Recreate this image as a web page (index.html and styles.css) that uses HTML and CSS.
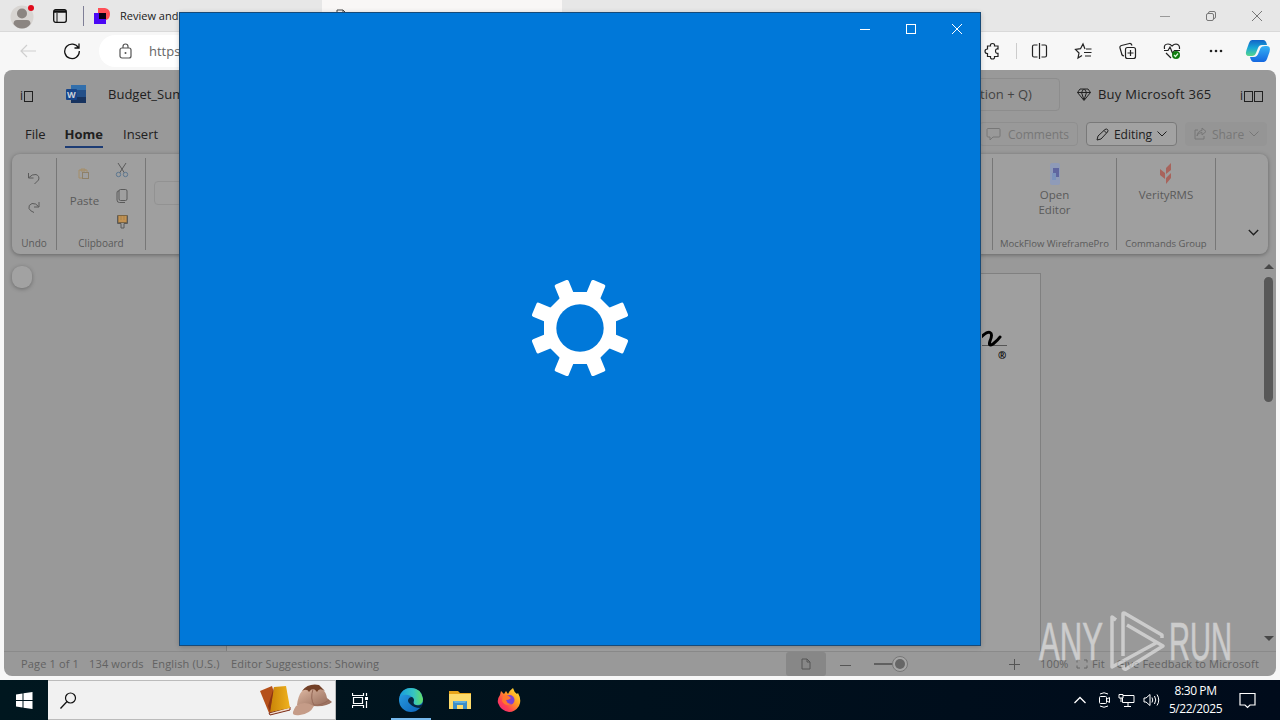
FILE: index.html
```html
<!DOCTYPE html>
<html lang="en">
<head>
    <meta charset="UTF-8">
    <meta name="viewport" content="width=device-width, initial-scale=1.0">
    <title>Desktop</title>
    <link rel="stylesheet" href="styles.css">
</head>
<body>
    <div class="desktop">
        <!-- Browser -->
        <div class="browser">
            <header class="tab-strip">
                <svg class="avatar" width="24" height="26" viewBox="0 0 24 26">
                    <circle cx="12" cy="14" r="11.500" fill="#d8d5d2"/>
                    <circle cx="12" cy="10.500" r="5" fill="#8b8581"/>
                    <path d="M3.500 21 Q3.500 17 7 17 H17 Q20.500 17 20.500 21 Q17 25.500 12 25.500 Q7 25.500 3.500 21Z" fill="#8b8581"/>
                    <circle cx="21" cy="5" r="3" fill="#e00b1c"/>
                </svg>
                <svg class="workspaces" width="14" height="14" viewBox="0 0 14 14">
                    <rect x=".7" y=".7" width="12.600" height="12.600" rx="2" fill="none" stroke="#111" stroke-width="1.300"/>
                    <path d="M1 2.500H13" stroke="#111" stroke-width="2.500"/>
                    <path d="M4 4V13" stroke="#111"/>
                </svg>
                <span class="tab-line"></span>
                <svg class="favicon" width="16" height="16" viewBox="0 0 16 16">
                    <path d="M4 0H11Q16 1 16 6Q16 11 12 12H4Z" fill="#ff4f57"/>
                    <path d="M0 5H12V16H0Z" fill="#4b08f5"/>
                    <path d="M5 5H12V11H5Z" fill="#080014"/>
                </svg>
                <span class="tab-title">Review and delete cookies | ANY</span>
                <div class="active-tab">
                    <svg width="11" height="14" viewBox="0 0 11 14"><path d="M1 1H7L10 4V13H1ZM7 1V4H10" fill="none" stroke="#444"/></svg>
                    <span>Document1To Share</span>
                </div>
                <span class="new-tab">+</span>
                <div class="window-buttons">
                    <svg viewBox="0 0 46 32"><path d="M18 16.500H28" stroke="#999"/></svg>
                    <svg viewBox="0 0 46 32"><path d="M20.500 13.500V13Q20.500 11.500 22 11.500H26Q27.500 11.500 27.500 13V17Q27.500 18.500 26 18.500" fill="none" stroke="#777"/><rect x="18.500" y="13.500" width="7" height="7" rx="1.500" fill="none" stroke="#777"/></svg>
                    <svg viewBox="0 0 46 32"><path d="M18 11L28 21M28 11L18 21" stroke="#777"/></svg>
                </div>
            </header>

            <div class="toolbar">
                <svg class="back" width="16" height="14" viewBox="0 0 16 14"><path d="M16 7H1M7 1L1 7L7 13" fill="none" stroke="#cfcfcf" stroke-width="1.200"/></svg>
                <svg class="reload" width="18" height="18" viewBox="0 0 18 18"><path d="M15.500 6A7.300 7.300 0 1 0 16.300 9M16 1.500V6H11.500" fill="none" stroke="#111" stroke-width="1.300"/></svg>
                <div class="address">
                    <svg width="14" height="16" viewBox="0 0 14 16"><rect x="1" y="5" width="11" height="10" rx="2" fill="none" stroke="#555" stroke-width="1.200"/><path d="M4 5V3.500Q4 1 6.500 1Q9 1 9 3.500V5" fill="none" stroke="#555" stroke-width="1.200"/><circle cx="6.500" cy="10" r="1" fill="#555"/></svg>
                    <span>https://</span>
                </div>
                <div class="toolbar-actions">
                    <svg viewBox="0 0 44 38"><path d="M17 14H20Q19.500 11.500 22 11.500Q24.500 11.500 24 14H27.500V17Q25 16.500 25 19Q25 21.500 27.500 21.300V24.500H24Q24.500 27 22 27Q19.500 27 20 24.500H17V21.500Q14.500 21.500 14.500 19.200Q14.500 17 17 17Z" transform="translate(-1.500 0)"/></svg>
                    <svg viewBox="0 0 44 38"><path d="M20 13H16.500Q15 13 15 14.500V23.500Q15 25 16.500 25H20M24 13H27.500Q29 13 29 14.500V23.500Q29 25 27.500 25H24M22 11V27" transform="translate(-.5 0)"/></svg>
                    <svg viewBox="0 0 44 38"><path d="M23 17L21 12L18.500 16.700L13.500 17.500L17 21L16 26L20 23.500M24 17H29.500M22 20.500H29.500M23 24H29"/></svg>
                    <svg viewBox="0 0 44 38"><path d="M18 24Q15.500 23.500 15.500 21L14 16Q13.500 14 15.500 13.500L23.500 11.500Q25.500 11.200 26 13.500"/><rect x="19.500" y="15.500" width="10" height="11" rx="2"/><path d="M24.500 18V24M21.500 21H27.500"/></svg>
                    <svg viewBox="0 0 44 38"><path d="M14.500 17Q13.500 12 18 12Q20.500 12 22 14Q24 12 26 12Q30 12.500 29.500 17M14 18.500H18L20 15L22.500 21L24.500 18.500H30M16 21L21 26"/><circle cx="26" cy="23" r="4" fill="#107c10" stroke="none"/><path d="M24 23L25.500 24.500L28 21.500" stroke="#d9f7d9"/></svg>
                    <svg viewBox="0 0 44 38"><g fill="#222" stroke="none"><circle cx="17" cy="19" r="1.300"/><circle cx="22" cy="19" r="1.300"/><circle cx="27" cy="19" r="1.300"/></g></svg>
                    <svg class="copilot" viewBox="0 0 40 38">
                        <defs>
                            <linearGradient id="cpA" x1="0" y1="0" x2="0" y2="1"><stop offset="0" stop-color="#1264c8"/><stop offset=".5" stop-color="#18a7d6"/><stop offset="1" stop-color="#57d68a"/></linearGradient>
                            <linearGradient id="cpB" x1="0" y1="0" x2="0" y2="1"><stop offset="0" stop-color="#35b2f5"/><stop offset="1" stop-color="#1467e0"/></linearGradient>
                        </defs>
                        <path d="M14 8H25Q28 8 29 13H24Q21 13 20 16L18 21Q17 24 14 24H11Q6.500 24 8.500 18L11 11Q12 8 14 8Z" fill="url(#cpA)" stroke="none"/>
                        <path d="M26 30H16Q13 30 12 25H16Q19 25 20.500 21L22.500 16Q23.500 14 27 14H29Q33 14 31.500 20L29 27Q28 30 26 30Z" fill="url(#cpB)" stroke="none"/>
                    </svg>
                </div>
            </div>

            <!-- Word document, dimmed -->
            <main class="word">
                <div class="word-header">
                    <span class="launcher">i<i></i></span>
                    <svg class="word-logo" width="20" height="18" viewBox="0 0 20 18">
                        <rect x="5" width="15" height="18" rx="1" fill="#234f88"/>
                        <rect x="5" width="15" height="5" fill="#326fac"/>
                        <rect x="5" y="12" width="15" height="6" fill="#17335f"/>
                        <rect y="4" width="11" height="11" rx="1" fill="#17458a"/>
                        <text x="1" y="13" font-family="Open Sans, sans-serif" font-size="9" font-weight="700" fill="#c9cfd8">W</text>
                    </svg>
                    <span class="doc-name">Budget_Summary</span>
                    <div class="search-box">Search (Option + Q)</div>
                    <div class="buy">
                        <svg width="14" height="13" viewBox="0 0 14 13"><path d="M3 1H11L13.500 4.500L7 12.500L.5 4.500ZM.5 4.500H13.500M4.500 4.500L7 12L9.500 4.500L7.500 1M4.500 4.500L6.500 1" fill="none" stroke="#222"/></svg>
                        <span>Buy Microsoft 365</span>
                    </div>
                    <span class="launcher">i<i></i><i></i></span>
                </div>

                <nav class="word-tabs">
                    <span>File</span>
                    <span class="current">Home</span>
                    <span>Insert</span>
                    <div class="word-actions">
                        <div class="action comments">
                            <svg width="15" height="14" viewBox="0 0 15 14"><path d="M2 1.500H13Q14 1.500 14 2.500V9Q14 10 13 10H7L4 13V10H2Q1 10 1 9V2.500Q1 1.500 2 1.500Z"/></svg>
                            <span>Comments</span>
                        </div>
                        <div class="action editing">
                            <svg width="13" height="13" viewBox="0 0 13 13"><path d="M1 12L2 8L9 1.500Q10.500 .5 11.500 1.500Q12.500 2.500 11.500 4L5 11ZM8 2.500L10.500 5"/></svg>
                            <span>Editing</span>
                            <svg width="10" height="6" viewBox="0 0 10 6"><path d="M.5 .5L5 5L9.500 .5"/></svg>
                        </div>
                        <div class="action share">
                            <svg width="14" height="14" viewBox="0 0 14 14"><path d="M5 3H2V12H11V9M4 9Q4.500 5.500 9 5.500V8L13 4.500L9 1V3.500Q4.500 4 4 9Z"/></svg>
                            <span>Share</span>
                            <svg width="10" height="6" viewBox="0 0 10 6"><path d="M.5 .5L5 5L9.500 .5"/></svg>
                        </div>
                    </div>
                </nav>

                <div class="ribbon">
                    <section class="group undo">
                        <div class="group-icons">
                            <svg width="14" height="14" viewBox="0 0 14 14"><path d="M1.500 2V7H6.500M2 6.500Q5 3 9 3.500Q13 5 11.500 9L7.500 13"/></svg>
                            <svg width="14" height="14" viewBox="0 0 14 14"><path d="M12 2V7H7M11.500 6.500Q9 3 5 3.500Q1 5 2 8.500Q3 11 7 12.500"/></svg>
                        </div>
                        <span class="group-name">Undo</span>
                    </section>
                    <section class="group clipboard">
                        <div class="clipboard-tools">
                            <div class="paste">
                                <svg width="12" height="12" viewBox="0 0 12 12"><path d="M4 10H1V2H9V4M3 1H7V3H3Z" stroke="#a58e68"/><rect x="4.500" y="4.500" width="6" height="6" stroke="#8e8068"/></svg>
                                <span>Paste</span>
                            </div>
                            <div class="group-icons">
                                <svg width="14" height="16" viewBox="0 0 14 16"><path d="M3 1L9.500 11M11 1L4.500 11"/><circle cx="3.500" cy="12.500" r="2.200" stroke="#5d7790"/><circle cx="10.500" cy="12.500" r="2.200" stroke="#5d7790"/></svg>
                                <svg width="14" height="16" viewBox="0 0 14 16"><rect x="4" y="1.500" width="8" height="11" rx="1.500"/><path d="M4 3H3Q2 3 2 5V12Q2 14.500 4.500 14.500H10"/></svg>
                                <svg width="14" height="16" viewBox="0 0 14 16"><rect x="3" y="1.500" width="9" height="7" fill="#c39252" stroke="#7b6543"/><path d="M6 2V6M9 2V6" stroke="#a5834f"/><path d="M2.500 1.500V9.500H6V14H9V9.500H12.500V1.500"/></svg>
                            </div>
                        </div>
                        <span class="group-name">Clipboard</span>
                    </section>
                    <section class="group font-group"><span class="font-field"></span></section>
                    <section class="group addin">
                        <svg width="12" height="24" viewBox="0 0 12 24"><rect x="1" y="1" width="10" height="22" rx="2" fill="#8f9bb8" stroke="none"/><rect x="4" y="6" width="6" height="9" fill="#5f66a0" stroke="none"/><rect x="3" y="11" width="4" height="7" fill="#7b93bd" stroke="none"/></svg>
                        <span class="addin-label">Open<br>Editor</span>
                        <span class="group-name">MockFlow WireframePro</span>
                    </section>
                    <section class="group addin">
                        <svg width="14" height="24" viewBox="0 0 14 24"><path d="M12 1V8L7 12V6ZM1 7L6 11V17L1 13ZM12 11V16L7 22V16Z" fill="#a8645c" stroke="none"/></svg>
                        <span class="addin-label">VerityRMS</span>
                        <span class="group-name">Commands Group</span>
                    </section>
                    <div class="ribbon-toggle">
                        <svg width="11" height="7" viewBox="0 0 11 7"><path d="M.8 1L5.500 5.700L10.200 1" stroke="#222" stroke-width="1.400"/></svg>
                    </div>
                </div>

                <div class="doc-area">
                    <span class="bubble"></span>
                    <div class="page">
                        <svg width="60" height="50" viewBox="0 0 60 50">
                            <path d="M0 26.500H25" stroke="#555"/>
                            <path d="M-3 20Q5 12 8 13.500Q11 15 8 22Q6 28 11 25Q16 21 18 18" fill="none" stroke="#000" stroke-width="3" stroke-linecap="round"/>
                            <text x="16" y="40" font-family="Open Sans, sans-serif" font-size="10" font-weight="700">®</text>
                        </svg>
                    </div>
                    <div class="scrollbar">
                        <span class="arrow-up"></span>
                        <span class="thumb"></span>
                        <span class="arrow-down"></span>
                    </div>
                </div>

                <footer class="status-bar">
                    <span class="s-page">Page 1 of 1</span>
                    <span class="s-words">134 words</span>
                    <span class="s-lang">English (U.S.)</span>
                    <span class="s-editor">Editor Suggestions: Showing</span>
                    <div class="zoom">
                        <span class="view-button"><svg width="10" height="12" viewBox="0 0 10 12"><path d="M1 1H6L9 4V11H1ZM6 1V4H9" fill="none" stroke="#555"/></svg></span>
                        <svg width="188" height="24" viewBox="0 0 188 24">
                            <path d="M14 13.500H25" stroke="#555"/>
                            <path d="M48 12H68" stroke="#606060" stroke-width="2"/>
                            <circle cx="74" cy="12" r="7.500" fill="#a5a5a5" stroke="#777"/>
                            <circle cx="74" cy="12" r="5" fill="#666"/>
                        </svg>
                        <svg class="plus" width="11" height="12" viewBox="0 0 11 12"><path d="M0 6.500H11M5.500 1V12" stroke="#555"/></svg>
                        <span class="s-zoom">100%</span>
                        <svg class="fit" width="12" height="10" viewBox="0 0 12 10"><path d="M4 1H1V3.500M8 1H11V3.500M1 6.500V9H4M11 6.500V9H8" fill="none" stroke="#666"/></svg>
                        <span class="s-fit">Fit</span>
                        <span class="s-feedback">Give Feedback to Microsoft</span>
                    </div>
                </footer>
            </main>
        </div>

        <!-- Taskbar -->
        <div class="taskbar">
            <div class="start">
                <svg width="17" height="17" viewBox="0 0 17 17"><path d="M0 2.500L6.500 1.500V8H0ZM7.500 1.300L16.500 0V8H7.500ZM0 9H6.500V15.500L0 14.500ZM7.500 9H16.500V17L7.500 15.700Z" fill="#fff"/></svg>
            </div>
            <div class="task-search">
                <svg width="17" height="17" viewBox="0 0 17 17"><circle cx="10.500" cy="6" r="5" fill="none" stroke="#111" stroke-width="1.200"/><path d="M7 9.500L.5 16.500" stroke="#111" stroke-width="1.300"/></svg>
                <svg class="doodle" width="74" height="36" viewBox="0 0 74 36">
                    <defs>
                        <linearGradient id="book" x1="0" x2="1"><stop offset="0" stop-color="#c98408"/><stop offset="1" stop-color="#efb21e"/></linearGradient>
                        <linearGradient id="hat" x1="0" y1="0" x2="1" y2="1"><stop offset="0" stop-color="#e5c0aa"/><stop offset="1" stop-color="#8f6554"/></linearGradient>
                    </defs>
                    <path d="M1 9L13 4L20 27L10 31Z" fill="#b5501a"/>
                    <path d="M10 31L31 25L31 28L11 33Z" fill="#f0dccb" stroke="#7c2a16"/>
                    <path d="M15 5L27 4L31 26L11 30Z" fill="url(#book)"/>
                    <path d="M15 5L11 30L9 24Z" fill="#8c3512"/>
                    <path d="M38 23Q40 5 53 4Q66 4 68 16L73 20Q68 25 54 24Z" fill="url(#hat)"/>
                    <path d="M37 24Q45 18 55 24Q51 32 41 33Q33 34 34 30Q35 27 37 24Z" fill="#c59c88"/>
                    <path d="M43 9Q49 1 60 3L66 9Q60 5 58 10Q54 4 50 10Q48 6 43 9Z" fill="#734027"/>
                    <path d="M54 7Q51 17 55 23Q62 24 70 18" fill="none" stroke="#946756"/>
                </svg>
            </div>
            <div class="task-button">
                <svg width="17" height="17" viewBox="0 0 17 17"><path d="M.5 1V3.500H11.500V1M.5 16V13.500H11.500V16M1.500 5.500H10.500V11.500H1.500ZM14.500 1V4M14.500 9V16" fill="none" stroke="#fff" stroke-width="1.200"/><rect x="13" y="5" width="3" height="3" fill="#fff"/></svg>
            </div>
            <div class="task-app running">
                <svg width="26" height="26" viewBox="0 0 26 26">
                    <defs><linearGradient id="edgeTop" x1="0" x2="1"><stop offset="0" stop-color="#169bdf"/><stop offset=".6" stop-color="#36c5c2"/><stop offset="1" stop-color="#65df63"/></linearGradient><linearGradient id="edgeLow" x1="0" y1="0" x2="1" y2="1"><stop offset="0" stop-color="#2aa1e4"/><stop offset="1" stop-color="#0b60b8"/></linearGradient></defs>
                    <circle cx="13" cy="13" r="12" fill="url(#edgeLow)"/>
                    <path d="M1.500 10Q4 1 13 1Q23 1 25 12Q25 18 18.500 18Q14.500 18 16 14Q15 9 10 8Q5 7 1.500 10Z" fill="url(#edgeTop)"/>
                    <path d="M10 13Q11 10 14 10Q17 12 15.500 15Q15 18 20 18.500Q23 18.500 25 16.500Q24 20 22 21Q16 21 12 17Q9.500 15 10 13Z" fill="#07263f"/>
                </svg>
            </div>
            <div class="task-app">
                <svg width="24" height="22" viewBox="0 0 24 22"><path d="M1 2H10L12 4H23V20H1Z" fill="#e8a51a"/><path d="M1 5H23V20H1Z" fill="#fddb6b"/><path d="M5 12H19V20H15V16H9V20H5Z" fill="#3c8ec8"/><path d="M5 12H19L17 14H7Z" fill="#61b0df"/></svg>
            </div>
            <div class="task-app">
                <svg width="24" height="26" viewBox="0 0 24 26">
                    <defs><linearGradient id="fox" x1="1" y1="0" x2="0" y2="1"><stop offset="0" stop-color="#fff33b"/><stop offset=".4" stop-color="#ff9c22"/><stop offset=".7" stop-color="#ff4052"/><stop offset="1" stop-color="#e6208a"/></linearGradient></defs>
                    <path d="M3 8L4 4L7 7L9 4L11 7Q13 3 16 1Q17 5 20 7L21 6Q25 13 22 19Q18 25 12 25Q4 24 1 16Q0 12 3 8Z" fill="url(#fox)"/>
                    <circle cx="12.500" cy="13" r="5" fill="#7b42d4"/>
                    <path d="M6 9Q11 7 14 11Q12 13 9 13Q10 17 15 17Q8 20 5 14Z" fill="#ff772d"/>
                </svg>
            </div>
            <div class="tray">
                <svg width="12" height="8" viewBox="0 0 12 8"><path d="M.5 7L6 1.500L11.500 7" stroke-width="1.300"/></svg>
                <svg width="12" height="16" viewBox="0 0 12 16"><rect x="1.500" y="4.500" width="7" height="7" rx="1"/><path d="M9 7L11.500 5.500V10.500L9 9M2 2Q6 -.5 10 2M2 14Q6 16.500 10 14"/></svg>
                <svg width="17" height="14" viewBox="0 0 17 14"><path d="M5 2.500H16V9.500H4.500V5M10 10V13M6 13.500H13M1 1.500H5V5H1ZM3 5V9"/></svg>
                <svg width="17" height="14" viewBox="0 0 17 14"><path d="M1 5H3L7 1.500V12.500L3 9H1ZM9 4.500Q10.500 7 9 9.500M11.500 3Q14 7 11.500 11M14 1.500Q17.500 7 14 12.500"/></svg>
                <div class="clock"><span>8:30 PM</span><span>5/22/2025</span></div>
                <svg class="notify" width="17" height="17" viewBox="0 0 17 17"><path d="M1 1.500H16V13H11L8.500 15.500L6 13H1Z" stroke-width="1.200"/></svg>
            </div>
        </div>

        <!-- Settings splash window -->
        <div class="settings-window">
            <div class="settings-title">
                <svg viewBox="0 0 46 32"><path d="M18 16.500H28"/></svg>
                <svg viewBox="0 0 46 32"><rect x="18.500" y="11.500" width="9" height="9"/></svg>
                <svg viewBox="0 0 46 32"><path d="M18 11L28 21M28 11L18 21"/></svg>
            </div>
            <div class="splash">
                <svg width="100" height="100" viewBox="-50 -50 100 100">
                    <defs><rect id="tooth" x="-7.500" y="-49.500" width="15" height="22" rx="1.800"/></defs>
                    <g fill="#fff">
                        <use href="#tooth" transform="rotate(22.500)"/>
                        <use href="#tooth" transform="rotate(67.500)"/>
                        <use href="#tooth" transform="rotate(112.500)"/>
                        <use href="#tooth" transform="rotate(157.500)"/>
                        <use href="#tooth" transform="rotate(202.500)"/>
                        <use href="#tooth" transform="rotate(247.500)"/>
                        <use href="#tooth" transform="rotate(292.500)"/>
                        <use href="#tooth" transform="rotate(337.500)"/>
                        <path d="M-14 -36H14L36 -14V14L14 36H-14L-36 14V-14Z"/>
                    </g>
                    <circle r="23.700" fill="#0078d9"/>
                </svg>
            </div>
        </div>

        <svg class="watermark" width="210" height="72" viewBox="0 0 210 72">
            <g font-family="Liberation Sans, sans-serif" font-size="53" fill="#fff" stroke="#fff" stroke-width=".6">
                <text x="1" y="52" textLength="64" lengthAdjust="spacingAndGlyphs">ANY</text>
                <text x="131" y="52" textLength="63" lengthAdjust="spacingAndGlyphs">RUN</text>
            </g>
            <path d="M78 12L74 9V59L118 35M85 48V6Q85 4 88 6L124 27V30M89 17L125 38L88 61Q85 62 85 57" fill="none" stroke="#fff" stroke-width="3.500" stroke-linejoin="round"/>
        </svg>
    </div>
</body>
</html>
```

FILE: styles.css
```css
:root {
    --blue: #0078d9;
    --dim: #999;
    --dim-light: #9f9f9f;
    --text: #202020;
}

* {
    margin: 0;
    padding: 0;
    box-sizing: border-box;
}

body {
    font-family: "Open Sans", "Noto Sans", sans-serif;
    font-size: 13px;
    color: var(--text);
    overflow: hidden;
}

svg {
    display: block;
    flex: none;
}

span {
    white-space: nowrap;
}

.desktop {
    position: relative;
    width: 1280px;
    height: 720px;
    overflow: hidden;
    display: flex;
    flex-direction: column;
}

.browser {
    height: 680px;
    display: flex;
    flex-direction: column;
    background: #f7f7f7;
}

/* Tab strip */
.tab-strip {
    height: 32px;
    display: flex;
    align-items: center;
    padding-left: 10px;
    background: #e7e7e7;
    border-bottom: 1px solid #d9d9d9;
}

.workspaces {
    margin-left: 19px;
}

.tab-line {
    width: 1px;
    height: 20px;
    margin: 0 10px 0 16px;
    background: #7e7e96;
}

.tab-title {
    width: 202px;
    margin-left: 10px;
    overflow: hidden;
    font-size: 11px;
}

.active-tab {
    width: 240px;
    height: 32px;
    display: flex;
    align-items: center;
    gap: 14px;
    padding-left: 14px;
    background: #f9f7f6;
    font-size: 11px;
}

.new-tab {
    margin-left: 11px;
    font-size: 18px;
}

.window-buttons {
    display: flex;
    margin-left: auto;
}

.window-buttons svg {
    width: 46px;
    height: 32px;
}

/* Address toolbar */
.toolbar {
    height: 38px;
    display: flex;
    align-items: center;
    padding: 0 2px 0 20px;
}

.reload {
    margin-left: 27px;
}

.address {
    width: 860px;
    height: 32px;
    display: flex;
    align-items: center;
    gap: 16px;
    margin-left: 18px;
    padding-left: 20px;
    border-radius: 16px;
    background: #fff;
    color: #666;
}

.toolbar-actions {
    display: flex;
    margin-left: auto;
}

.toolbar-actions svg {
    width: 44px;
    height: 38px;
    fill: none;
    stroke: #222;
    stroke-width: 1.2;
}

.toolbar-actions svg:first-child {
    width: 46px;
    margin-right: 1px;
    background: linear-gradient(#ccc, #ccc) right center / 1px 16px no-repeat;
}

.toolbar-actions .copilot {
    width: 40px;
}

/* Word */
.word {
    height: 606px;
    margin: 0 4px;
    display: flex;
    flex-direction: column;
    border-radius: 8px;
    background: var(--dim);
    overflow: hidden;
}

.word-header {
    height: 48px;
    display: flex;
    align-items: center;
    padding: 0 13px 0 16px;
}

.launcher {
    display: flex;
    align-items: flex-end;
    gap: 1px;
    padding-top: 4px;
    font-size: 12px;
    line-height: 12px;
}

.launcher i {
    width: 9px;
    height: 11px;
    border: 1px solid var(--text);
}

.word-logo {
    margin: 0 22px 0 33px;
}

.search-box {
    width: 600px;
    height: 33px;
    margin-left: auto;
    padding-right: 27px;
    border: 1px solid #8d8d8d;
    border-radius: 4px;
    line-height: 31px;
    text-align: right;
    color: #444;
}

.buy {
    width: 134px;
    display: flex;
    align-items: center;
    gap: 7px;
    margin: 0 29px 0 17px;
    letter-spacing: 0.25px;
}

.word-tabs {
    height: 32px;
    display: flex;
    align-items: center;
    gap: 20px;
    padding: 0 9px 0 21px;
}

.word-tabs .current {
    align-self: stretch;
    margin-left: -1px;
    padding-top: 7px;
    font-weight: 700;
    background: linear-gradient(#1d3c74, #1d3c74) center 28px / 100% 2px no-repeat;
}

.word-actions {
    display: flex;
    gap: 8px;
    margin-left: auto;
}

.action {
    height: 24px;
    display: flex;
    align-items: center;
    justify-content: center;
    gap: 5px;
    border: 1px solid #8f8f8f;
    border-radius: 4px;
    font-size: 12px;
    color: #777;
}

.action svg,
.ribbon svg {
    fill: none;
    stroke: currentColor;
}

.comments {
    width: 99px;
    gap: 7px;
    padding-right: 2px;
}

.editing {
    width: 91px;
    background: #a2a2a2;
    border-color: #797979;
    color: var(--text);
}

.share {
    width: 82px;
    background: #959595;
    border-color: #959595;
}

/* Ribbon */
.ribbon {
    height: 100px;
    display: grid;
    grid-template-columns: 45px 89px 847px 124px 99px 52px;
    margin: 4px 8px 0;
    border-radius: 8px;
    background: var(--dim-light);
    box-shadow: 0 1px 4px rgba(0, 0, 0, 0.35);
    color: #5a5a5a;
}

.group {
    height: 92px;
    display: flex;
    flex-direction: column;
    align-items: center;
    margin-top: 4px;
    border-right: 1px solid #777;
}

.group-name {
    margin-top: auto;
    font-size: 10px;
    line-height: 13px;
}

.group-icons {
    display: flex;
    flex-direction: column;
    gap: 10px;
}

.undo .group-icons {
    gap: 15px;
    margin-top: 13px;
}

.clipboard-tools {
    display: flex;
    gap: 16px;
    margin: 4px 3px 0 0;
}

.paste {
    display: flex;
    flex-direction: column;
    align-items: center;
    gap: 13px;
    margin-top: 6px;
    font-size: 11.5px;
}

.font-group {
    align-items: flex-start;
}

.font-field {
    width: 120px;
    height: 24px;
    margin: 23px 8px;
    border: 1px solid #929292;
    border-radius: 4px;
}

.addin svg {
    margin-top: 4px;
}

.addin-label {
    font-size: 11.5px;
    line-height: 15px;
    text-align: center;
    margin-top: 1px;
}

.addin .group-name {
    font-size: 9.5px;
}

.ribbon-toggle {
    display: flex;
    align-items: flex-end;
    justify-content: flex-end;
    padding: 0 9px 18px 0;
}

/* Document */
.doc-area {
    flex: 1;
    display: flex;
    align-items: flex-start;
    padding-left: 8px;
}

.bubble {
    width: 20px;
    height: 22px;
    margin-top: 12px;
    border-radius: 9px;
    background: #a2a2a2;
    box-shadow: 0 1px 4px rgba(0, 0, 0, 0.3);
}

.page {
    width: 815px;
    height: 378px;
    margin: 19px 0 0 194px;
    padding: 45px 0 0 755px;
    border: 1px solid #808080;
    border-bottom: none;
    background: var(--dim-light);
}

.scrollbar {
    width: 9px;
    height: 100%;
    display: flex;
    flex-direction: column;
    align-items: center;
    margin: 0 3px 0 auto;
    padding: 10px 0 10px;
}

.arrow-up,
.arrow-down {
    border: 5px solid transparent;
    border-top: none;
    border-bottom: 5px solid #484848;
}

.arrow-down {
    margin-top: auto;
    transform: rotate(180deg);
}

.thumb {
    width: 9px;
    height: 125px;
    margin-top: 8px;
    border-radius: 5px;
    background: #585858;
}

/* Status bar */
.status-bar {
    height: 25px;
    display: flex;
    align-items: center;
    padding: 0 0 1px 17px;
    border-top: 1px solid #8a8a8a;
    font-size: 11px;
    letter-spacing: 0.15px;
    color: #626262;
}

.s-page {
    width: 68px;
}

.s-words {
    width: 63px;
}

.s-lang {
    width: 79px;
}

.zoom {
    display: flex;
    align-items: center;
    margin-left: auto;
    padding-right: 17px;
}

.view-button {
    width: 40px;
    height: 24px;
    display: flex;
    align-items: center;
    justify-content: center;
    border-radius: 3px;
    background: #878787;
}

.view-button + svg {
    margin-right: -5px;
}

.s-zoom {
    width: 36px;
    margin-left: 20px;
}

.s-fit {
    width: 20px;
    margin-left: 4px;
}

.s-feedback {
    width: 147px;
    text-align: right;
}

/* Taskbar */
.taskbar {
    height: 40px;
    display: flex;
    background: linear-gradient(90deg, #00171f, #000b1b);
}

.start,
.task-button,
.task-app {
    width: 48px;
    display: flex;
    align-items: center;
    justify-content: center;
}

.task-search {
    width: 288px;
    display: flex;
    align-items: center;
    justify-content: space-between;
    padding: 0 2px 0 12px;
    background: #f1f1f1;
    border: 1px solid #bbb;
    border-left: none;
}

.task-button {
    margin-right: 2px;
}

.task-app {
    width: 49px;
}

.task-button + .task-app {
    width: 50px;
    margin-right: -1px;
}

.running {
    background: linear-gradient(#76b9ed, #76b9ed) center bottom / 40px 2px no-repeat;
}

.tray {
    display: flex;
    align-items: center;
    margin-left: auto;
    padding-right: 24px;
    gap: 8px;
}

.tray svg {
    fill: none;
    stroke: #fff;
}

.tray svg:first-child {
    margin-right: 4px;
}

.clock {
    width: 55px;
    display: flex;
    flex-direction: column;
    align-items: center;
    font-size: 12px;
    line-height: 18px;
    letter-spacing: -0.4px;
    color: #fff;
}

.notify {
    margin-left: 8px;
}

/* Settings window on top of the browser */
.settings-window {
    position: absolute;
    left: 179px;
    top: 12px;
    width: 802px;
    height: 634px;
    display: flex;
    flex-direction: column;
    border: 1px solid #174a78;
    background: var(--blue);
    box-shadow: 0 1px 5px rgba(0, 0, 0, 0.2);
}

.settings-title {
    height: 32px;
    display: flex;
    justify-content: flex-end;
}

.settings-title svg {
    width: 46px;
    height: 32px;
    fill: none;
    stroke: #fff;
}

.splash {
    flex: 1;
    display: flex;
    align-items: center;
    justify-content: center;
    padding-bottom: 34px;
}

.watermark {
    position: absolute;
    left: 1038px;
    top: 608px;
    opacity: 0.5;
}
```
